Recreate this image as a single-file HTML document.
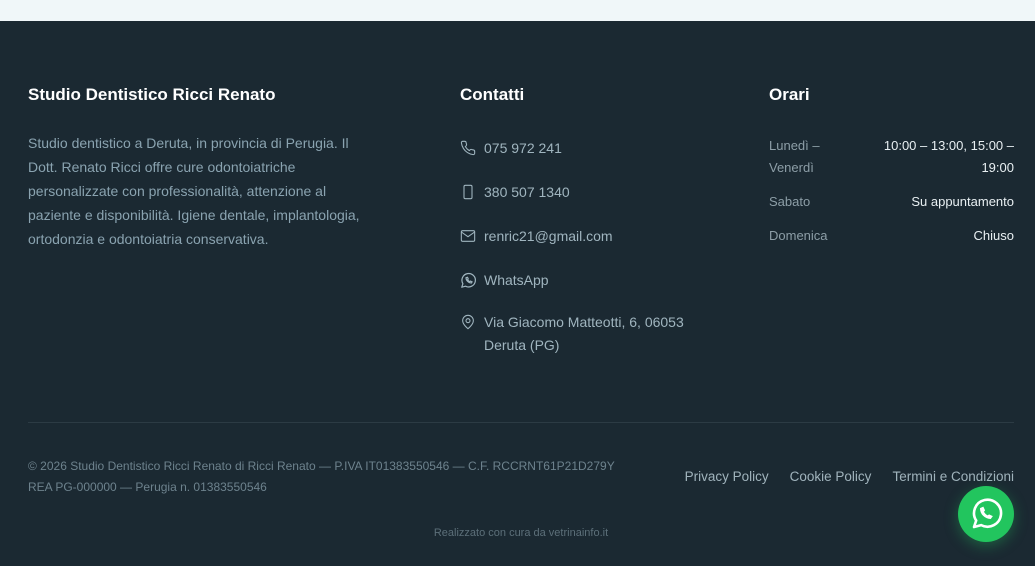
<!DOCTYPE html>
<html><head><meta charset="utf-8"><style>
*{margin:0;padding:0;box-sizing:border-box}
body{width:1035px;height:566px;background:#1b2932;font-family:"Liberation Sans",sans-serif;position:relative;overflow:hidden}
.top{position:absolute;left:0;top:0;width:1035px;height:21px;background:#f0f7f9}
.a{position:absolute;white-space:nowrap}
h3{position:absolute;color:#fff;font-size:17px;font-weight:bold;top:85px}
.desc{position:absolute;left:28px;top:131px;white-space:nowrap;color:#8aa3b0;font-size:14px;line-height:24px}
.c{position:absolute;left:460px;color:#a0b5bf;font-size:14px;line-height:23px}
.c svg{position:absolute;left:0;top:3px}
.c span{position:absolute;left:24px;white-space:nowrap}
.lab{color:#8d9ea7;font-size:13px;line-height:22px}
.val{color:#e8eff2;font-size:13px;line-height:22px;text-align:right}
.line{position:absolute;left:28px;top:422px;width:986px;height:1px;background:#2c3b44}
.copy{position:absolute;left:28px;top:456px;color:#6d828d;font-size:12px;line-height:21px}
.links{position:absolute;right:21px;top:469px;color:#a0b3bc;font-size:13.5px;white-space:nowrap}
.links span{margin-left:21px}
.wa{position:absolute;left:958px;top:486px;width:56px;height:56px;border-radius:50%;background:#22c55e;box-shadow:0 4px 14px rgba(34,197,94,.35)}
</style></head><body>
<div class="top"></div>
<h3 style="left:28px">Studio Dentistico Ricci Renato</h3>
<h3 style="left:460px">Contatti</h3>
<h3 style="left:769px">Orari</h3>
<div class="desc">Studio dentistico a Deruta, in provincia di Perugia. Il<br>Dott. Renato Ricci offre cure odontoiatriche<br>personalizzate con professionalità, attenzione al<br>paziente e disponibilità. Igiene dentale, implantologia,<br>ortodonzia e odontoiatria conservativa.</div>

<div class="c" style="top:137px"><svg width="16" height="16" viewBox="0 0 24 24" fill="none" stroke="#a0b5bf" stroke-width="1.6"><path d="M22 16.9v3a2 2 0 0 1-2.2 2 19.8 19.8 0 0 1-8.6-3.1 19.5 19.5 0 0 1-6-6A19.8 19.8 0 0 1 2.1 4.2 2 2 0 0 1 4.1 2h3a2 2 0 0 1 2 1.7c.1 1 .4 1.9.7 2.8a2 2 0 0 1-.5 2.1L8 9.9a16 16 0 0 0 6 6l1.3-1.3a2 2 0 0 1 2.1-.4c.9.3 1.8.6 2.8.7a2 2 0 0 1 1.7 2z"/></svg><span>075 972 241</span></div>
<div class="c" style="top:181px"><svg width="16" height="16" viewBox="0 0 24 24" fill="none" stroke="#a0b5bf" stroke-width="1.6"><rect x="6" y="2" width="12" height="20" rx="2"/><path d="M12 18h.01"/></svg><span>380 507 1340</span></div>
<div class="c" style="top:225px"><svg width="16" height="16" viewBox="0 0 24 24" fill="none" stroke="#a0b5bf" stroke-width="1.6"><rect x="2" y="4" width="20" height="16" rx="2"/><path d="M2 6l10 7 10-7"/></svg><span>renric21@gmail.com</span></div>
<div class="c" style="top:269px"><svg width="17" height="17" viewBox="0 0 24 24" fill="none" stroke="#a0b5bf" stroke-width="1.7"><path d="M2.5 21.5l1.6-5A9.5 9.5 0 1 1 7.8 20z" stroke-linejoin="round"/><path d="M8.5 8c0 4 3.5 7.5 7.5 7.5l1-1.6-2.2-1-1 .8c-1.1-.5-2.5-1.9-3-3l.8-1-1-2.2z"/></svg><span>WhatsApp</span></div>
<div class="c" style="top:311px"><svg width="16" height="16" viewBox="0 0 24 24" fill="none" stroke="#a0b5bf" stroke-width="1.6"><path d="M20 10c0 6-8 12-8 12s-8-6-8-12a8 8 0 0 1 16 0z"/><circle cx="12" cy="10" r="3"/></svg><span>Via Giacomo Matteotti, 6, 06053<br>Deruta (PG)</span></div>

<div class="a lab" style="left:769px;top:135px">Lunedì –<br>Venerdì</div>
<div class="a val" style="right:21px;top:135px">10:00 – 13:00, 15:00 –<br>19:00</div>
<div class="a lab" style="left:769px;top:191px">Sabato</div>
<div class="a val" style="right:21px;top:191px">Su appuntamento</div>
<div class="a lab" style="left:769px;top:225px">Domenica</div>
<div class="a val" style="right:21px;top:225px">Chiuso</div>

<div class="line"></div>
<div class="copy">© 2026 Studio Dentistico Ricci Renato di Ricci Renato — P.IVA IT01383550546 — C.F. RCCRNT61P21D279Y<br>REA PG-000000 — Perugia n. 01383550546</div>
<div class="links">Privacy Policy<span>Cookie Policy</span><span>Termini e Condizioni</span></div>
<div class="a" style="left:0;width:1042px;text-align:center;top:527px;color:#5c6f79;font-size:11px">Realizzato con cura da vetrinainfo.it</div>
<div class="wa"><svg width="56" height="56" viewBox="0 0 56 56" fill="none" stroke="#fff" stroke-width="2.6"><path d="M16 41l2.2-6.5a13.5 13.5 0 1 1 5 4.6z" stroke-linejoin="round"/><path d="M22.5 22.5c0 5.5 4.8 10 10 10l1.6-2.2-3-1.4-1.4 1.1c-1.6-.8-3.6-2.8-4.3-4.3l1.1-1.4-1.4-3z" fill="#fff" stroke-width="1"/></svg></div>
</body></html>
